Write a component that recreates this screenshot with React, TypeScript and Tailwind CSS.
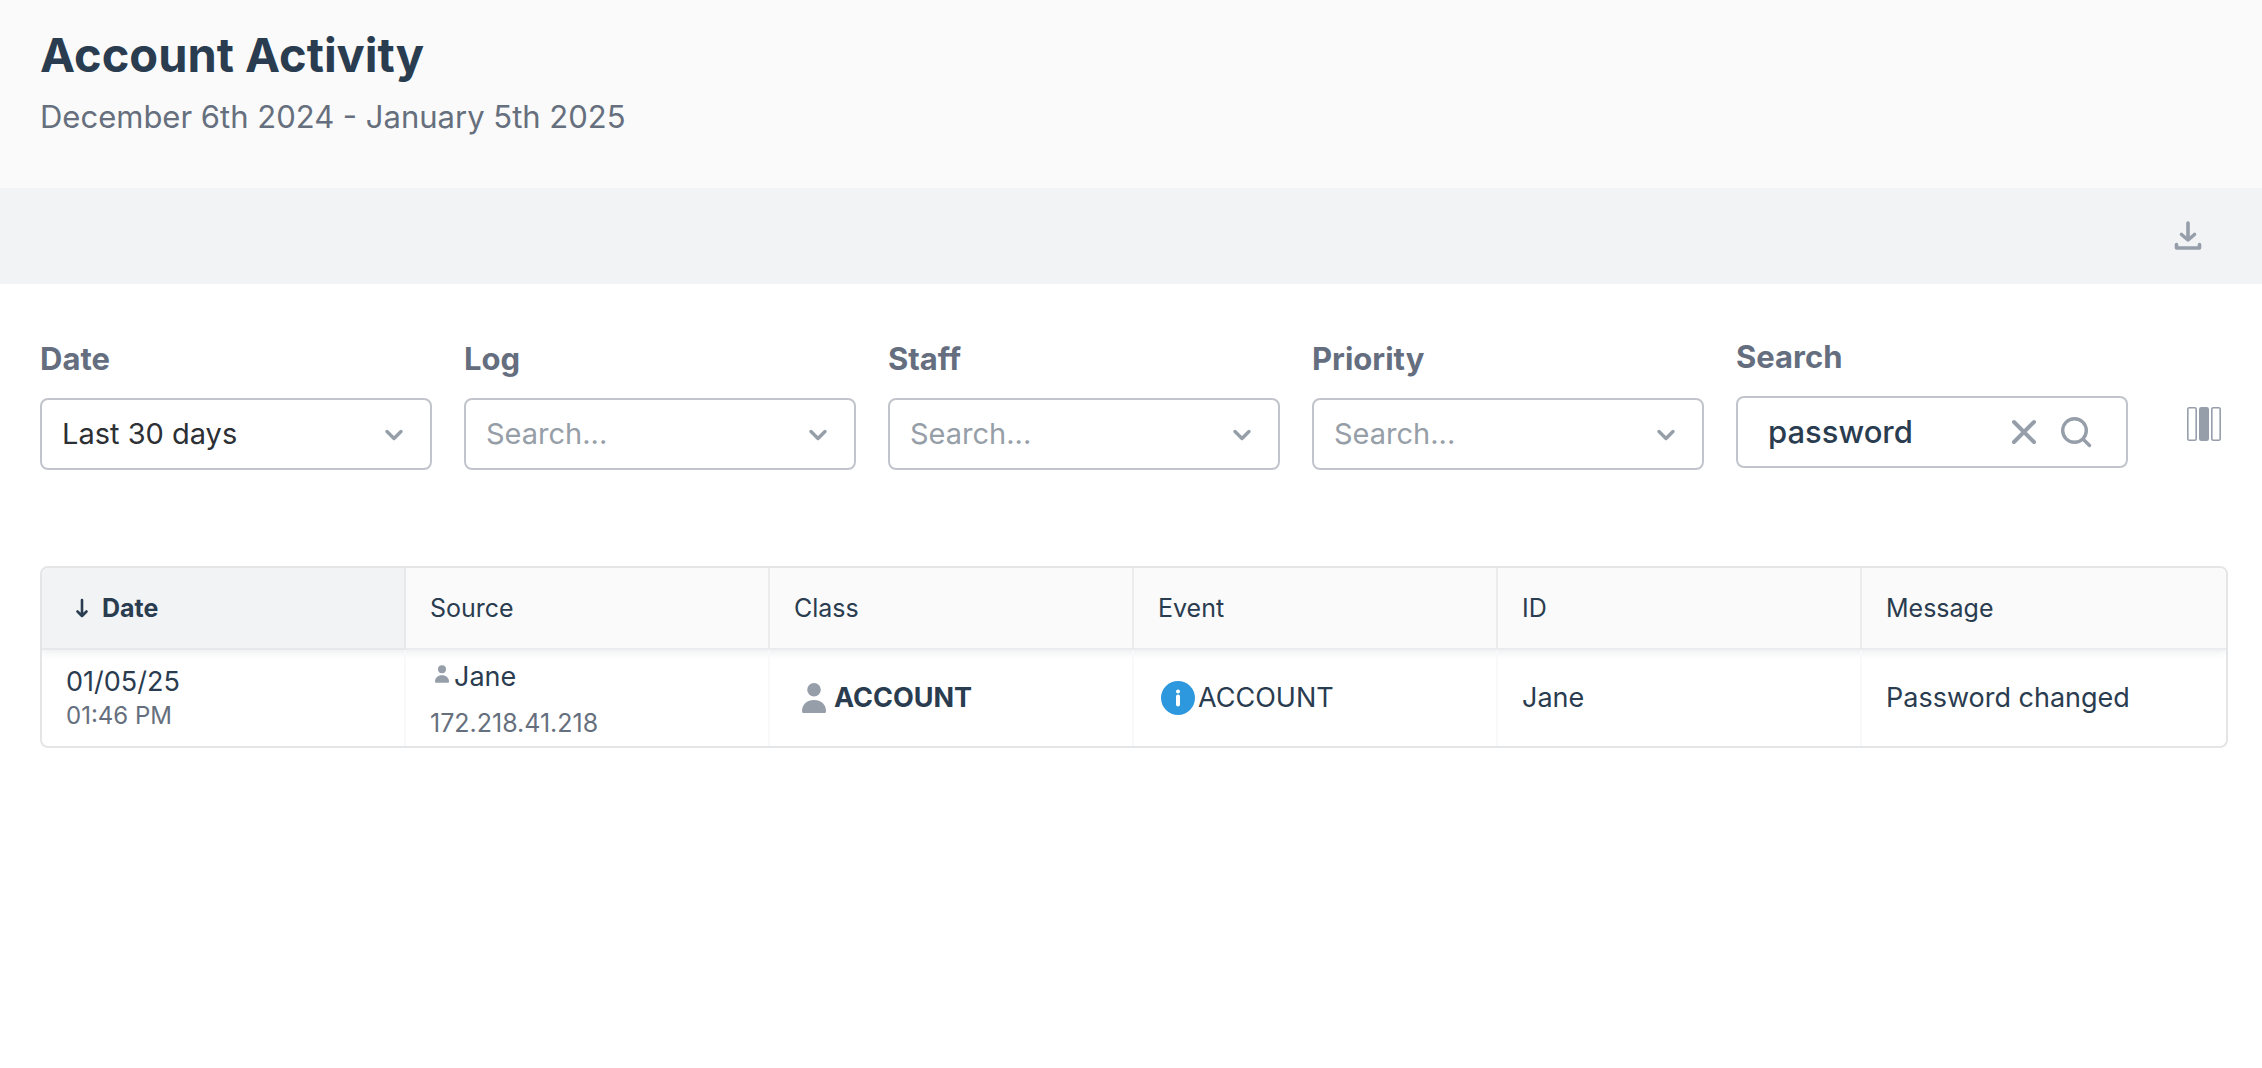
import { useState, type ReactNode } from "react";

const filters = [
  { id: "date", label: "Date", value: "Last 30 days" },
  { id: "log", label: "Log", value: "" },
  { id: "staff", label: "Staff", value: "" },
  { id: "priority", label: "Priority", value: "" },
];

const columns = ["Source", "Class", "Event", "ID", "Message"];

function DownloadIcon() {
  return (
    <svg className="w-8 h-8" viewBox="0 0 32 32" fill="none" stroke="currentColor" strokeWidth="3.6" strokeLinecap="round" strokeLinejoin="round">
      <path d="M16 3V20M9.500 14.500l6.500 5.500 6.500-5.500" />
      <path d="M4.500 24.500v3.500h23v-3.500" />
    </svg>
  );
}

function PersonIcon({ className }: { className: string }) {
  return (
    <svg className={className} viewBox="0 0 24 30" fill="currentColor">
      <circle cx="12" cy="6.8" r="6.8" />
      <path d="M0 28C0 21.500 5 17 12 17s12 4.500 12 11c0 1.400-.5 2-1.600 2H1.600C.5 30 0 29.400 0 28z" />
    </svg>
  );
}

function InfoIcon() {
  return (
    <svg className="w-[34px] h-[34px]" viewBox="0 0 34 34">
      <circle cx="17" cy="17" r="17" fill="#2d98dd" />
      <circle cx="17" cy="10.500" r="2" fill="#fff" />
      <path d="M17 15.500v8" stroke="#fff" strokeWidth="4" strokeLinecap="round" />
    </svg>
  );
}

function SelectFilter({ id, label, value }: { id: string; label: string; value: string }) {
  return (
    <div className="flex flex-1 flex-col gap-5 pt-0.5">
      <label htmlFor={id} className="text-[31px] leading-[38px] font-bold text-[#646e7f]">
        {label}
      </label>
      <div className="relative">
        <select
          id={id}
          defaultValue={value}
          className={`w-full h-[72px] appearance-none rounded-lg border-2 border-[#c1c5cb] bg-white pl-5 pr-16 text-[29px] ${value ? "text-[#2c2f33]" : "text-[#969ea8]"}`}
        >
          <option value={value}>{value || "Search..."}</option>
        </select>
        <svg className="pointer-events-none absolute right-7 top-[27px] w-5 h-5" viewBox="0 0 20 20" fill="none" stroke="#969ea8" strokeWidth="3.4" strokeLinecap="round" strokeLinejoin="round">
          <path d="M3 6.500l7 7 7-7" />
        </svg>
      </div>
    </div>
  );
}

function Cell({ children }: { children: ReactNode }) {
  return (
    <td className="h-24 border-r-2 border-[#f8f9fa] px-6 pb-px align-middle last:border-r-0">
      {children}
    </td>
  );
}

export default function App() {
  const [search, setSearch] = useState("password");

  return (
    <div className="min-h-screen bg-white font-['Inter',sans-serif] text-[#2a3c4f]">
      {/* Title */}
      <header className="bg-[#fafafa] px-10 pt-[25px] pb-[51px]">
        <h1 className="text-[47px] leading-[60px] font-bold">Account Activity</h1>
        <p className="mt-3 text-[31px] leading-[40px] text-[#666f7d]">December 6th 2024 - January 5th 2025</p>
      </header>

      {/* Toolbar */}
      <div className="flex h-24 items-center justify-end bg-[#f1f3f5] pr-[58px] text-[#969ea9]">
        <button type="button" aria-label="Download">
          <DownloadIcon />
        </button>
      </div>

      <main className="pl-10 pr-[34px] pt-[54px]">
        {/* Filters */}
        <div className="flex items-start gap-8">
          {filters.map((f) => (
            <SelectFilter key={f.id} {...f} />
          ))}
          <div className="flex flex-1 flex-col gap-5">
            <label htmlFor="search" className="text-[31px] leading-[38px] font-bold text-[#646e7f]">
              Search
            </label>
            <div className="flex h-[72px] items-center rounded-lg border-2 border-[#c1c5cb] pl-[30px] pr-6 text-[#969ea9]">
              <input
                id="search"
                type="text"
                value={search}
                onChange={(e) => setSearch(e.target.value)}
                className="w-0 flex-1 text-[31px] font-medium text-[#2a3c4f] outline-none"
              />
              <button type="button" aria-label="Clear" onClick={() => setSearch("")} className="flex w-[52px] justify-center">
                <svg className="w-8 h-8" viewBox="0 0 32 32" fill="none" stroke="currentColor" strokeWidth="4" strokeLinecap="round">
                  <path d="M6 6l20 20M26 6L6 26" />
                </svg>
              </button>
              <button type="button" aria-label="Search" className="flex w-[52px] justify-center">
                <svg className="w-8 h-8" viewBox="0 0 32 32" fill="none" stroke="currentColor" strokeWidth="3.4" strokeLinecap="round">
                  <circle cx="14.500" cy="14.500" r="11.800" />
                  <path d="M23 23l6.500 6.500" />
                </svg>
              </button>
            </div>
          </div>
          <button type="button" aria-label="Columns" className="ml-5 mb-[22px] flex w-12 h-12 items-center justify-center self-end text-[#969ea9]">
            <svg className="w-[34px] h-[34px]" viewBox="0 0 34 34" fill="none" stroke="currentColor" strokeWidth="1.600">
              <rect x="0.800" y="0.800" width="8.400" height="32.400" rx="1.500" />
              <rect x="12.800" y="0.800" width="8.400" height="32.400" rx="1.500" fill="currentColor" />
              <rect x="24.800" y="0.800" width="8.400" height="32.400" rx="1.500" />
            </svg>
          </button>
        </div>

        {/* Activity table */}
        <div className="mt-24 overflow-hidden rounded-lg border-2 border-[#e4e5e7]">
          <table className="w-full table-fixed border-separate border-spacing-0 text-left">
            <thead className="shadow-[0_2px_8px_rgba(42,60,79,0.10)]">
              <tr>
                <th scope="col" aria-sort="descending" className="h-[82px] border-r-2 border-b-2 border-[#e6e8ea] bg-[#f1f3f5] px-6 text-[25px] leading-[32px] font-bold">
                  <button type="button" className="flex items-center gap-1">
                    <span className="flex w-8 justify-center">
                      <svg className="w-5 h-5" viewBox="0 0 20 20" fill="none" stroke="currentColor" strokeWidth="2.600" strokeLinecap="round" strokeLinejoin="round">
                        <path d="M10 2v16M5.500 13.500L10 18l4.500-4.500" />
                      </svg>
                    </span>
                    Date
                  </button>
                </th>
                {columns.map((c) => (
                  <th key={c} scope="col" className="border-r-2 border-b-2 border-[#ebecee] bg-[#fafafa] px-6 text-[25px] leading-[32px] font-normal last:border-r-0">
                    {c}
                  </th>
                ))}
              </tr>
            </thead>
            <tbody className="text-[27px] leading-[36px]">
              <tr>
                <Cell>
                  <div>01/05/25</div>
                  <div className="text-[24px] leading-[32px] text-[#666f7d]">01:46 PM</div>
                </Cell>
                <Cell>
                  <div className="flex items-start pt-0.5">
                    <span className="flex w-6 justify-center pt-1.5 text-[#969ea9]">
                      <PersonIcon className="w-3.5 h-[18px]" />
                    </span>
                    Jane
                  </div>
                  <div className="mt-3 text-[25px] leading-[32px] text-[#666f7d]">172.218.41.218</div>
                </Cell>
                <Cell>
                  <div className="flex items-center font-bold">
                    <span className="flex w-10 justify-center text-[#969ea9]">
                      <PersonIcon className="w-6 h-[30px]" />
                    </span>
                    ACCOUNT
                  </div>
                </Cell>
                <Cell>
                  <div className="flex items-center">
                    <span className="flex w-10 justify-center">
                      <InfoIcon />
                    </span>
                    ACCOUNT
                  </div>
                </Cell>
                <Cell>Jane</Cell>
                <Cell>Password changed</Cell>
              </tr>
            </tbody>
          </table>
        </div>
      </main>
    </div>
  );
}
